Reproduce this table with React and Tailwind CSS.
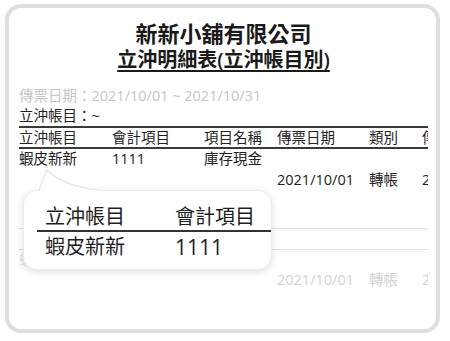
import React from 'react';

const cols = ['w-[93px]', 'w-[92px]', 'w-[73px]', 'w-[92px]', 'w-[53px]', 'w-[60px]'];

function Row({ cells, className = '' }) {
    return (
        <div className={`flex items-center whitespace-nowrap ${className}`}>
            {cells.map((c, i) => (
                <div key={i} className={`${cols[i]} shrink-0`}>{c}</div>
            ))}
        </div>
    );
}

export default function App() {
    return (
        <div
            className="w-[450px] h-[341px] bg-white pt-[4px] pl-[5px]"
            style={{ fontFamily: '"Open Sans", "Noto Sans CJK TC", sans-serif' }}
        >
            <div className="relative w-[435px] h-[329px] border-4 border-[#dedede] rounded-[16px] px-[10px] pt-[11px] overflow-hidden">
                <div className="w-[409px] overflow-hidden text-[#222] text-[14.5px]">
                    <div className="text-center text-[22px] font-semibold leading-[28px] text-[#1a1a1a]">新新小舖有限公司</div>
                    <div className="text-center text-[20px] font-semibold leading-[26px] text-[#1a1a1a]">
                        <span className="underline underline-offset-[3px] decoration-[1.5px]">立沖明細表(立沖帳目別)</span>
                    </div>
                    <div className="mt-[13px] leading-[20px] text-[#c6c6c6]">傳票日期：2021/10/01 ~ 2021/10/31</div>
                    <div className="leading-[20px]">立沖帳目：~</div>
                    <div className="border-y-2 border-[#3a3a3a]">
                        <Row className="h-[19px]" cells={['立沖帳目', '會計項目', '項目名稱', '傳票日期', '類別', '傳票號碼']} />
                    </div>
                    <Row className="h-[20px]" cells={['蝦皮新新', '1111', '庫存現金', '', '', '']} />
                    <Row className="h-[22px]" cells={['', '', '', '2021/10/01', '轉帳', '2021100001']} />
                    <div className="h-[38px] border-b border-[#e2e2e2]" />
                    <div className="h-[21px] border-b border-[#e2e2e2]" />
                    <Row className="h-[19px] text-[#e4e4e4]" cells={['蝦皮新新', '1111', '庫存現金', '', '', '']} />
                    <Row className="h-[22px] text-[#d2d2d2]" cells={['', '', '', '2021/10/01', '轉帳', '2021100002']} />
                </div>

                <div className="absolute left-[14px] top-[182px] w-[249px] h-[80px] bg-white rounded-[14px] border border-[#ececec] shadow-[0_2px_8px_rgba(0,0,0,0.12)] overflow-hidden pl-[13px] text-[20px] text-[#1e1e1e]">
                    <div className="flex h-[41px] pt-[13px] leading-[26px] border-b-2 border-[#333] w-[260px]">
                        <div className="w-[130px] pl-[8px]">立沖帳目</div>
                        <div className="pl-[8px]">會計項目</div>
                    </div>
                    <div className="flex leading-[30px]">
                        <div className="w-[130px] pl-[8px]">蝦皮新新</div>
                        <div className="pl-[8px] text-[21px]">1111</div>
                    </div>
                </div>
                <svg className="absolute left-[19px] top-[160px]" width="80" height="26" viewBox="0 0 80 26">
                    <path d="M11,26 C13,16 16,8 19,2 C30,13 46,20 74,22.5 L74,26 Z" fill="#fff" />
                    <path d="M11,23 C13,16 16,8 19,2 C30,13 46,20 74,22.5" fill="none" stroke="#e6e6e6" strokeWidth="1.2" />
                </svg>
            </div>
        </div>
    );
}
